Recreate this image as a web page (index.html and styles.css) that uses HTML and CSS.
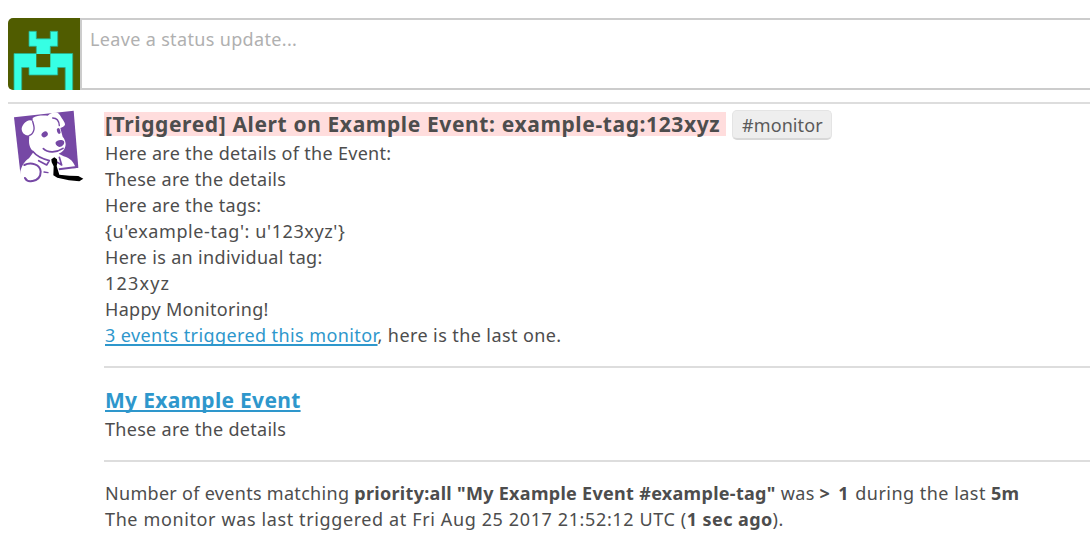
FILE: index.html
```html
<!DOCTYPE html>
<html lang="en">
<head>
<meta charset="utf-8">
<title>Event stream</title>
<link rel="stylesheet" href="styles.css">
</head>
<body>
<div class="composer">
  <svg class="identicon" width="72" height="72" viewBox="0 0 72 72">
    <rect width="72" height="72" fill="#505c00"/>
    <path fill="#36ffe4" stroke="#2bae8d" stroke-width=".8" d="M21 13.300h7.300v7.500h14v-7.500h7.400v15h-7.400v7.200h22.400v37h-7.500v-23h-7.500v7.500h-28.700v-7.500h-7.300v23h-7.700v-37h22.300v-7.200h-7.300z"/>
    <path fill="#505c00" d="M28.300 36h14v13.200h-14z"/>
  </svg>
  <div class="field">Leave a status update...</div>
</div>
<main class="event">
  <svg class="dog" width="80" height="76" viewBox="24 36 240 228">
    <path fill="#7648a5" d="M42 58 221 38l14 171-173 24z"/>
    <path fill="#fff" d="M98 69c-15-10-34 12-33 25 1 12 11 20 23 18l-1 16c0 16 5 25 14 33l-14 20c-12 7-22 22-26 39l-3 32h68c30-3 60-32 101-42-5-17-16-30-36-35l-15-8c12-5 20-13 21-28 0-9-4-17-9-23l-7-26c5-3 13-5 14-10 1-6-9-17-15-28-8-15-25-9-37 1-19-1-34 0-45 7z"/>
    <g fill="none" stroke="#7648a5" stroke-linecap="round" stroke-linejoin="round" stroke-width="4">
      <path d="M98 70c2 9 7 20 3 28-3 8-8 13-13 14M158 60c12 0 19 8 20 23"/>
      <path d="M130 152c14 14 40 12 59-1" stroke-width="5"/>
      <path d="M98 160c12 15 29 23 50 28l-8 13-24-13M178 178l7 23-12-8" stroke-width="5"/>
      <path d="M132 222l12 2" stroke-width="4"/>
      <path d="M73 201c20-10 48-2 49 20 0 15-10 25-24 28M75 240c4 8 12 11 21 9" stroke-width="6"/>
    </g>
    <g fill="#7648a5"><ellipse cx="134" cy="109" rx="10" ry="8" transform="rotate(-35 134 109)"/><ellipse cx="176" cy="99" rx="5" ry="9" transform="rotate(-18 176 99)"/><path d="M167 133c3-8 20-10 25-3 3 8-5 17-14 17-5-1-13-7-11-14zM176 211l54-7 5 5-58 8z"/></g>
    <path d="m154 184 9-6 8 6 1 11-2 9 8 26 30 3 27 1 15 8-12 8-31-3-35-8-12-7 1-27-6-12z"/>
  </svg>
  <article class="body">
    <header class="heading"><h1 class="title">[Triggered] Alert on Example Event: example-tag:123xyz</h1><span class="tag">#monitor</span></header>
    <div class="text">
      <p class="details">Here are the details of the Event:</p>
      <p class="details">These are the details</p>
      <p class="details">Here are the tags:</p>
      <p class="dict">{u'example-tag': u'123xyz'}</p>
      <p class="single">Here is an individual tag:</p>
      <p class="value">123xyz</p>
      <p class="details">Happy Monitoring!</p>
      <p class="count"><a class="link">3 events triggered this monitor</a>, here is the last one.</p>
    </div>
    <section class="sub">
      <h2 class="subtitle"><a class="link">My Example Event</a></h2>
      <p class="details">These are the details</p>
    </section>
    <section class="summary">
      <p class="details">Number of events matching <b class="query">priority:all "My Example Event #example-tag"</b> <span class="single">was</span> <b class="threshold">&gt; 1</b> <span class="during">during the last</span> <b class="ago">5m</b></p>
      <p class="stamp">The monitor was last triggered at Fri Aug 25 2017 21:52:12 UTC (<b class="ago">1 sec ago</b>).</p>
    </section>
  </article>
</main>
</body>
</html>
```
FILE: styles.css
```css
* { box-sizing: border-box; margin: 0; padding: 0; }
body { width: 1090px; height: 548px; overflow: hidden; background: #fff; color: #4d4d4d; font: 18px/26px "Noto Sans", sans-serif; padding: 18px 0 0 8px; }
.composer { display: flex; height: 72px; }
.identicon { border-radius: 5px 0 0 5px; flex: none; }
.field { flex: 1; border: 2px solid #ccc; border-width: 2px 0 2px 2px; padding: 6px 8px; color: #b0b0b0; letter-spacing: .34px; }
.event { display: flex; margin-top: 12px; border-top: 2px solid #ddd; padding-top: 6px; }
.dog { flex: none; }
.body { margin-left: 16px; flex: 1; white-space: nowrap; }
.heading { display: flex; height: 30px; }
.title { width: 622px; height: 24px; margin-top: 2px; padding-left: 1px; background: #fdd; font-size: 21px; line-height: 24px; letter-spacing: .62px; }
.tag { width: 100px; height: 30px; margin-left: 6px; padding-left: 9px; border: 1px solid #e4e4e4; border-bottom: 2px solid #d8d8d8; border-radius: 5px; background: #eee; color: #5a5a5a; line-height: 29px; letter-spacing: .1px; }
.text p, .sub > *, .summary p { padding-left: 1px; }
.details { letter-spacing: .3px; }
.single { letter-spacing: .35px; }
.dict { letter-spacing: .6px; }
.value { letter-spacing: 1.2px; }
.stamp { letter-spacing: .62px; }
.query { letter-spacing: .3px; }
.threshold { letter-spacing: 1.8px; }
.during { letter-spacing: .48px; }
.ago { letter-spacing: .4px; }
.link { color: #2e97cc; text-decoration: underline 2px; text-underline-offset: 2px; text-decoration-skip-ink: none; }
.count { letter-spacing: .41px; }
.subtitle { font-size: 21px; line-height: 30px; letter-spacing: .3px; }
.sub { margin-top: 18px; padding-top: 17px; border-top: 2px solid #ddd; }
.sub .details { margin-top: 1px; }
.summary { margin-top: 18px; padding-top: 18px; border-top: 2px solid #ddd; }
```
